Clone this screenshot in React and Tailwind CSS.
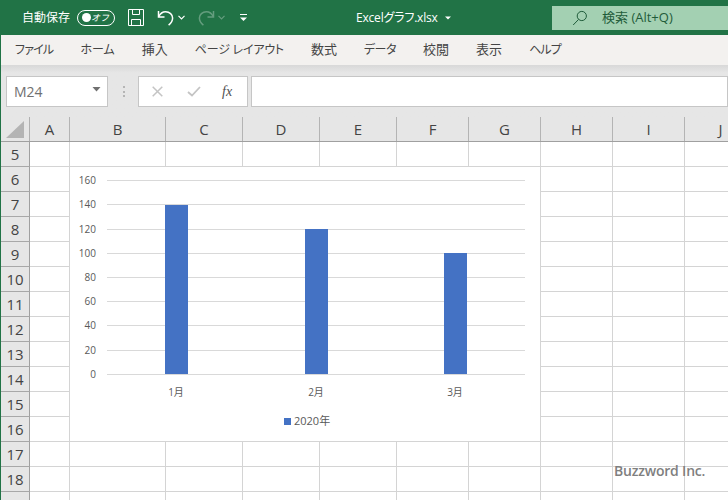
const tabs = [
  { label: 'ファイル', cls: 'text-[12px] tracking-[-0.8px]' },
  { label: 'ホーム', cls: 'text-[12px]' },
  { label: '挿入', cls: 'text-[13px]' },
  { label: 'ページ レイアウト', cls: 'text-[12px] tracking-[-0.2px]' },
  { label: '数式', cls: 'text-[13px]' },
  { label: 'データ', cls: 'text-[12px] tracking-[-0.5px]' },
  { label: '校閲', cls: 'text-[13px]' },
  { label: '表示', cls: 'text-[13px]' },
  { label: 'ヘルプ', cls: 'text-[12px] tracking-[-0.8px]' },
];
const rows = [5, 6, 7, 8, 9, 10, 11, 12, 13, 14, 15, 16, 17, 18, 19];
const cols = [
  { name: 'A', w: 'w-[40px]' },
  { name: 'B', w: 'w-[96px]' },
  { name: 'C', w: 'w-[77px]' },
  { name: 'D', w: 'w-[77px]' },
  { name: 'E', w: 'w-[77px]' },
  { name: 'F', w: 'w-[72px]' },
  { name: 'G', w: 'w-[72px]' },
  { name: 'H', w: 'w-[72px]' },
  { name: 'I', w: 'w-[72px]' },
  { name: 'J', w: 'w-[72px]' },
];
const gridY = [374, 350, 325, 301, 277, 253, 229, 204, 180];
const bars = [
  { x: 165, y: 205, label: '1月', cx: 176 },
  { x: 305, y: 229, label: '2月', cx: 316 },
  { x: 444, y: 253, label: '3月', cx: 455 },
];

const Chevron = ({ className }) => (
  <svg width="7" height="5" viewBox="0 0 7 5" className={className} fill="none" stroke="currentColor" strokeWidth="1.2">
    <path d="M0.5 0.8 3.5 3.8 6.5 0.8" />
  </svg>
);

const TitleBar = () => (
  <div className="flex h-[35px] shrink-0 items-center bg-[#217346] text-white">
    <span className="ml-[22px] text-[12px]">自動保存</span>
    <div className="ml-[7px] flex h-[16px] w-[38px] items-center justify-between rounded-full border border-white pl-[4px] pr-[5px]">
      <span className="h-[9px] w-[9px] rounded-full bg-white" />
      <span className="text-[9px] italic leading-none">オフ</span>
    </div>
    <svg width="16" height="17" viewBox="0 0 16 17" className="ml-[13px]" fill="none" stroke="#fff" strokeWidth="1">
      <path d="M0.5 0.5H15.5V16.5H0.5Z" />
      <path d="M4.5 0.5V5.5H11.5V0.5" />
      <path d="M3.5 16.5V10.5H12.5V16.5" />
    </svg>
    <svg width="18" height="18" viewBox="0 0 18 18" className="ml-[13px]" fill="none" stroke="#fff" strokeWidth="1.5">
      <path d="M1.5 2V8H7.5" />
      <path d="M1.7 7.8C3.2 4.6 5.5 2.8 8.6 2.8C12.6 2.8 15.6 5.5 15.6 9C15.6 12 14 14.3 11.6 16.2" />
    </svg>
    <Chevron className="ml-[3px]" />
    <svg width="18" height="18" viewBox="0 0 18 18" className="ml-[12px] opacity-30" fill="none" stroke="#fff" strokeWidth="1.5">
      <path d="M16.5 2V8H10.5" />
      <path d="M16.3 7.8C14.8 4.6 12.5 2.8 9.4 2.8C5.4 2.8 2.4 5.5 2.4 9C2.4 12 4 14.3 6.4 16.2" />
    </svg>
    <Chevron className="ml-[3px] opacity-30" />
    <svg width="9" height="9" viewBox="0 0 9 9" className="ml-[14px]">
      <path d="M1 1.5H8" stroke="#fff" strokeWidth="1" />
      <path d="M1 4.5H8L4.5 8Z" fill="#fff" />
    </svg>
    <span className="ml-[108px] text-[12px] tracking-[-0.2px] [font-feature-settings:'palt']">Excelグラフ.xlsx</span>
    <svg width="6" height="4" viewBox="0 0 6 4" className="ml-[7px]">
      <path d="M0 0.5H6L3 3.5Z" fill="#fff" />
    </svg>
    <div className="ml-auto flex h-[24px] w-[176px] items-center bg-[#a3d0b2] text-[#1f5c3a]">
      <svg width="16" height="16" viewBox="0 0 16 16" className="ml-[20px]" fill="none" stroke="#1f5c3a" strokeWidth="1">
        <circle cx="9.8" cy="6" r="4.6" />
        <path d="M6.6 9.4 1.2 15" />
      </svg>
      <span className="ml-[14px] text-[13px]">検索 (Alt+Q)</span>
    </div>
  </div>
);

const RibbonTabs = () => (
  <div className="flex h-[30px] shrink-0 items-center gap-[27px] bg-[#f3f1ef] pl-[14px] text-[#444444] [font-feature-settings:'palt']">
    {tabs.map((tab) => (
      <span key={tab.label} className={tab.cls}>{tab.label}</span>
    ))}
  </div>
);

const FormulaBar = () => (
  <div className="flex h-[52px] shrink-0 items-start bg-gradient-to-b from-[#d8d8d8] from-0% to-[#e6e6e6] to-15% pt-[11px]">
    <div className="ml-[5px] flex h-[31px] w-[102px] items-center justify-between border border-[#c6c6c6] bg-white pl-[7px] pr-[6px] text-[14px] text-[#707070]">
      <span>M24</span>
      <svg width="9" height="5" viewBox="0 0 9 5" className="mb-[5px]">
        <path d="M0.5 0H8.5L4.5 4.5Z" fill="#707070" />
      </svg>
    </div>
    <div className="ml-[15px] mt-[10px] flex h-[11px] w-[2px] flex-col justify-between">
      <span className="h-[2px] bg-[#b5b5b5]" />
      <span className="h-[2px] bg-[#b5b5b5]" />
      <span className="h-[2px] bg-[#b5b5b5]" />
    </div>
    <div className="ml-[13px] flex h-[31px] w-[110px] items-center border border-[#c6c6c6] bg-white">
      <svg width="11" height="11" viewBox="0 0 11 11" className="ml-[13px]" fill="none" stroke="#c4c4c4" strokeWidth="1.5">
        <path d="M0.7 0.7 10.3 10.3M10.3 0.7 0.7 10.3" />
      </svg>
      <svg width="14" height="11" viewBox="0 0 14 11" className="ml-[24px]" fill="none" stroke="#c4c4c4" strokeWidth="1.8">
        <path d="M1 6 5 9.5 13 1" />
      </svg>
      <span className="ml-[21px] font-['Liberation_Serif',serif] text-[14px] italic text-[#505050]">fx</span>
    </div>
    <div className="ml-[3px] h-[31px] flex-1 border border-[#c6c6c6] bg-white" />
  </div>
);

const Chart = () => (
  <svg viewBox="70 167 470 274" className="absolute left-[69px] top-[50px] h-[274px] w-[470px] bg-white">
    {gridY.map((y, i) => (
      <g key={y}>
        <rect x="107" y={y} width="418" height="1" fill="#d9d9d9" />
        <text x="96" y={y + 4} textAnchor="end" fontSize="10" fill="#595959">{i * 20}</text>
      </g>
    ))}
    {bars.map((bar) => (
      <g key={bar.label}>
        <rect x={bar.x} y={bar.y} width="23" height={374 - bar.y} fill="#4472c4" />
        <text x={bar.cx} y="396" textAnchor="middle" fontSize="10" fill="#595959">{bar.label}</text>
      </g>
    ))}
    <rect x="284" y="418" width="7" height="7" fill="#4472c4" />
    <text x="294" y="425" fontSize="11" fill="#595959">2020年</text>
  </svg>
);

const Sheet = () => (
  <div className="relative flex-1 overflow-hidden">
    <div className="flex h-[25px] border-b border-[#a0a0a0] bg-[#e6e6e6] text-[15px] text-[#444444]">
      <div className="flex w-[29px] shrink-0 items-center justify-center border-r border-[#b0b0b0]">
        <svg width="18" height="17" viewBox="0 0 18 17">
          <path d="M18 0V17H0Z" fill="#b4b4b4" />
        </svg>
      </div>
      {cols.map((col) => (
        <div key={col.name} className={`${col.w} flex shrink-0 items-center justify-center border-r border-[#b4b4b4]`}>
          {col.name}
        </div>
      ))}
    </div>
    {rows.map((row) => (
      <div key={row} className="flex h-[25px]">
        <div className="flex w-[29px] shrink-0 items-center justify-center border-b border-r border-b-[#a8a8a8] border-r-[#a0a0a0] bg-[#e6e6e6] text-[15px] text-[#444444]">
          {row}
        </div>
        {cols.map((col) => (
          <div key={col.name} className={`${col.w} shrink-0 border-b border-r border-[#d4d4d4]`} />
        ))}
      </div>
    ))}
    <Chart />
    <span className="absolute left-[613px] top-[343px] text-[14px] font-semibold tracking-[-0.2px] text-[#7f7f7f]">Buzzword Inc.</span>
  </div>
);

export default function App() {
  return (
    <div className="flex h-[500px] w-[728px] flex-col overflow-hidden bg-white font-['Open_Sans','Noto_Sans_CJK_JP',sans-serif]">
      <TitleBar />
      <div className="flex flex-1 flex-col overflow-hidden border-l border-[#217346]">
        <RibbonTabs />
        <FormulaBar />
        <Sheet />
      </div>
    </div>
  );
}
